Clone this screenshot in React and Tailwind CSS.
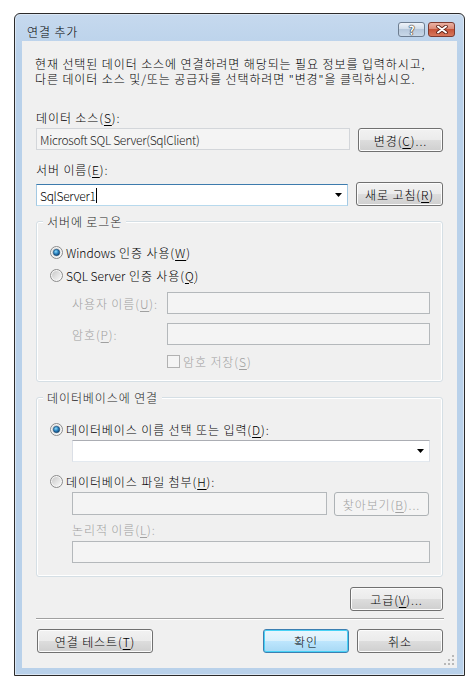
import React from 'react';

// mnemonic underline, like (S)
const U = ({ children }) => <span className="underline underline-offset-[2px]">{children}</span>;

const btn =
  'h-[24px] flex items-center justify-center rounded-[3px] border border-[#707070] bg-[linear-gradient(#f2f2f2,#ebebeb_50%,#dddddd_50%,#cfcfcf)] shadow-[inset_0_0_0_1px_#fcfcfc] text-black';
const btnDefault =
  'h-[24px] flex items-center justify-center rounded-[3px] border border-[#3c7fb1] bg-[linear-gradient(#eaf6fd,#d9f0fc_50%,#bee6fd_50%,#a7d9f5)] shadow-[inset_0_0_0_1px_#48d2f6] text-black';
const btnDisabled =
  'h-[24px] flex items-center justify-center rounded-[3px] border border-[#adb2b5] bg-[#f4f4f4] text-[#a0a0a0]';

const box = 'border border-[#abadb3] border-x-[#dbdfe6] border-b-[#e3e9ef] bg-white';
const boxDisabled = 'border border-[#b4b8bb] bg-[#f4f4f4]';

function Arrow() {
  return (
    <div className="w-[17px] h-full flex items-center justify-center shrink-0">
      <svg width="7" height="4" viewBox="0 0 7 4">
        <polygon points="0,0 7,0 3.5,4" fill="#000" />
      </svg>
    </div>
  );
}

function Radio({ checked }) {
  return (
    <svg width="13" height="13" viewBox="0 0 13 13" className="shrink-0">
      <defs>
        <linearGradient id="rbg" x1="0" y1="0" x2="1" y2="1">
          <stop offset="0" stopColor="#c9c9c9" />
          <stop offset="1" stopColor="#f8f8f8" />
        </linearGradient>
        <radialGradient id="rdot" cx="0.4" cy="0.35" r="0.7">
          <stop offset="0" stopColor="#8fdcfa" />
          <stop offset="0.5" stopColor="#2c84c2" />
          <stop offset="1" stopColor="#0e3e69" />
        </radialGradient>
      </defs>
      <circle cx="6.5" cy="6.5" r="6" fill="#f6f6f6" stroke="#8a8a8a" />
      <circle cx="6.5" cy="6.5" r="4.5" fill="url(#rbg)" />
      {checked && <circle cx="6.5" cy="6.5" r="3.2" fill="url(#rdot)" stroke="#17476f" strokeWidth="0.6" />}
    </svg>
  );
}

function Group({ title, className, children }) {
  return (
    <div className={'relative border border-[#d5dfe5] rounded-[3px] shadow-[inset_0_0_0_1px_#fff] pl-[13px] ' + className}>
      <span className="absolute left-[6px] top-[-8px] px-[4px] bg-[#f0f0f0] text-[#1e1e1e]">{title}</span>
      {children}
    </div>
  );
}

export default function App() {
  return (
    <div className="w-[474px] h-[684px] bg-white pt-[13px] pl-[14px] font-['Noto_Sans_CJK_KR','Noto_Sans',sans-serif] font-light tracking-[0.9px] text-[12px] leading-[15px] text-black">
      <div className="w-[451px] h-[663px] flex flex-col border border-[#2b2b2b] rounded-t-[6px] bg-[linear-gradient(#c6d9ee,#b9d1ea_40px)] shadow-[inset_0_0_0_1px_#dbe7f4]">
        {/* title bar */}
        <div className="h-[27px] shrink-0 flex items-start">
          <div className="pl-[12px] pt-[10px]">연결 추가</div>
          <div className="ml-auto mt-[8px] mr-[9px] flex gap-[3px]">
            <div className="w-[27px] h-[15px] rounded-[3px] border border-[#6d7d90] bg-[linear-gradient(#eef3f9,#cfdcea_50%,#b6c8dc_50%,#c9d8e8)] flex items-center justify-center">
              <span className="text-[12px] leading-[13px] font-bold tracking-normal text-white [text-shadow:0_0_1px_#222,0_0_1px_#222,0_0_1px_#222]">?</span>
            </div>
            <div className="w-[27px] h-[15px] rounded-[3px] border border-[#7d3a2f] bg-[linear-gradient(#eab1a3,#d98672_50%,#c75439_50%,#d7785c)] flex items-center justify-center">
              <svg width="12" height="9" viewBox="0 0 12 9">
                <path d="M2 1.5 L10 7.5 M10 1.5 L2 7.5" stroke="#5b1f14" strokeWidth="3.6" strokeLinecap="round" />
                <path d="M2 1.5 L10 7.5 M10 1.5 L2 7.5" stroke="#fff" strokeWidth="2" strokeLinecap="round" />
              </svg>
            </div>
          </div>
        </div>

        {/* client area */}
        <div className="relative mx-[7px] h-[627px] bg-[#f0f0f0] px-[14px]">
          <div className="mt-[15px] -ml-px whitespace-nowrap">
            <div>현재 선택된 데이터 소스에 연결하려면 해당되는 필요 정보를 입력하시고,</div>
            <div>다른 데이터 소스 및/또는 공급자를 선택하려면 "변경"을 클릭하십시오.</div>
          </div>

          <div className="mt-[24px]">
            데이터 소스(<U>S</U>):
          </div>
          <div className="mt-[3px] h-[24px] flex items-start justify-between">
            <div className="w-[314px] h-[22px] border border-[#d3d6da] bg-[#f4f4f4] pl-[3px] flex items-center tracking-[-0.3px] text-[#222]">
              Microsoft SQL Server(SqlClient)
            </div>
            <div className={btn + ' w-[85px]'}>
              변경(<U>C</U>)...
            </div>
          </div>

          <div className="mt-[10px]">
            서버 이름(<U>E</U>):
          </div>
          <div className="mt-[5px] h-[24px] flex items-end justify-between">
            <div className="w-[312px] h-[22px] flex items-center border border-[#3d7bad] border-x-[#a4c9e3] border-b-[#b7d9ed] bg-white pl-[3px] tracking-[-0.3px]">
              <span>SqlServer1</span>
              <span className="inline-block w-px h-[15px] bg-black" />
              <div className="ml-auto h-full">
                <Arrow />
              </div>
            </div>
            <div className={btn + ' w-[87px]'}>
              새로 고침(<U>R</U>)
            </div>
          </div>

          <Group title="서버에 로그온" className="mt-[15px] h-[161px] pt-[22px]">
            <div className="h-[16px] flex items-center gap-[3px]">
              <Radio checked />
              <span>
                <span className="tracking-normal">Windows</span> 인증 사용(<U>W</U>)
              </span>
            </div>
            <div className="mt-[7px] h-[16px] flex items-center gap-[3px]">
              <Radio />
              <span>
                <span className="tracking-normal">SQL Server</span> 인증 사용(<U>Q</U>)
              </span>
            </div>
            <div className="mt-[9px] ml-[22px] h-[22px] flex items-center text-[#a0a0a0]">
              <span className="w-[95px]">
                사용자 이름(<U>U</U>):
              </span>
              <div className={boxDisabled + ' w-[263px] h-[22px]'} />
            </div>
            <div className="mt-[9px] ml-[22px] h-[22px] flex items-center text-[#a0a0a0]">
              <span className="w-[95px]">
                암호(<U>P</U>):
              </span>
              <div className={boxDisabled + ' w-[263px] h-[22px]'} />
            </div>
            <div className="mt-[9px] ml-[117px] h-[15px] flex items-center gap-[3px] text-[#a0a0a0]">
              <div className="w-[13px] h-[13px] border border-[#b1b1b1] bg-[#f4f4f4]" />
              <span>
                암호 저장(<U>S</U>)
              </span>
            </div>
          </Group>

          <Group title="데이터베이스에 연결" className="mt-[15px] h-[180px] pt-[23px]">
            <div className="h-[16px] flex items-center gap-[3px]">
              <Radio checked />
              <span>
                데이터베이스 이름 선택 또는 입력(<U>D</U>):
              </span>
            </div>
            <div className={box + ' mt-[3px] ml-[22px] w-[358px] h-[22px] flex justify-end'}>
              <Arrow />
            </div>
            <div className="mt-[11px] h-[16px] flex items-center gap-[3px]">
              <Radio />
              <span>
                데이터베이스 파일 첨부(<U>H</U>):
              </span>
            </div>
            <div className="mt-[3px] ml-[22px] h-[24px] flex items-start gap-[7px]">
              <div className={boxDisabled + ' w-[255px] h-[23px]'} />
              <div className={btnDisabled + ' w-[95px]'}>
                찾아보기(<U>B</U>)...
              </div>
            </div>
            <div className="mt-[6px] ml-[22px] text-[#a0a0a0]">
              논리적 이름(<U>L</U>):
            </div>
            <div className={boxDisabled + ' mt-[4px] ml-[22px] w-[358px] h-[22px]'} />
          </Group>

          <div className="mt-[10px] flex justify-end">
            <div className={btn + ' w-[93px]'}>
              고급(<U>V</U>)...
            </div>
          </div>

          <div className="mt-[7px] -mr-px border-t border-[#a0a0a0] border-b border-b-white" />

          <div className="mt-[9px] flex gap-[8px]">
            <div className={btn + ' ml-px w-[116px]'}>
              연결 테스트(<U>T</U>)
            </div>
            <div className={btnDefault + ' ml-auto w-[86px]'}>확인</div>
            <div className={btn + ' w-[86px]'}>취소</div>
          </div>

          {/* resize grip */}
          <svg width="10" height="10" viewBox="0 0 10 10" className="absolute right-[3px] bottom-[3px]">
            {[[8, 0], [8, 4], [4, 4], [8, 8], [4, 8], [0, 8]].map(([x, y]) => (
              <rect key={x + '-' + y} x={x} y={y} width="2" height="2" fill="#b8b8b8" />
            ))}
          </svg>
        </div>
      </div>
    </div>
  );
}
